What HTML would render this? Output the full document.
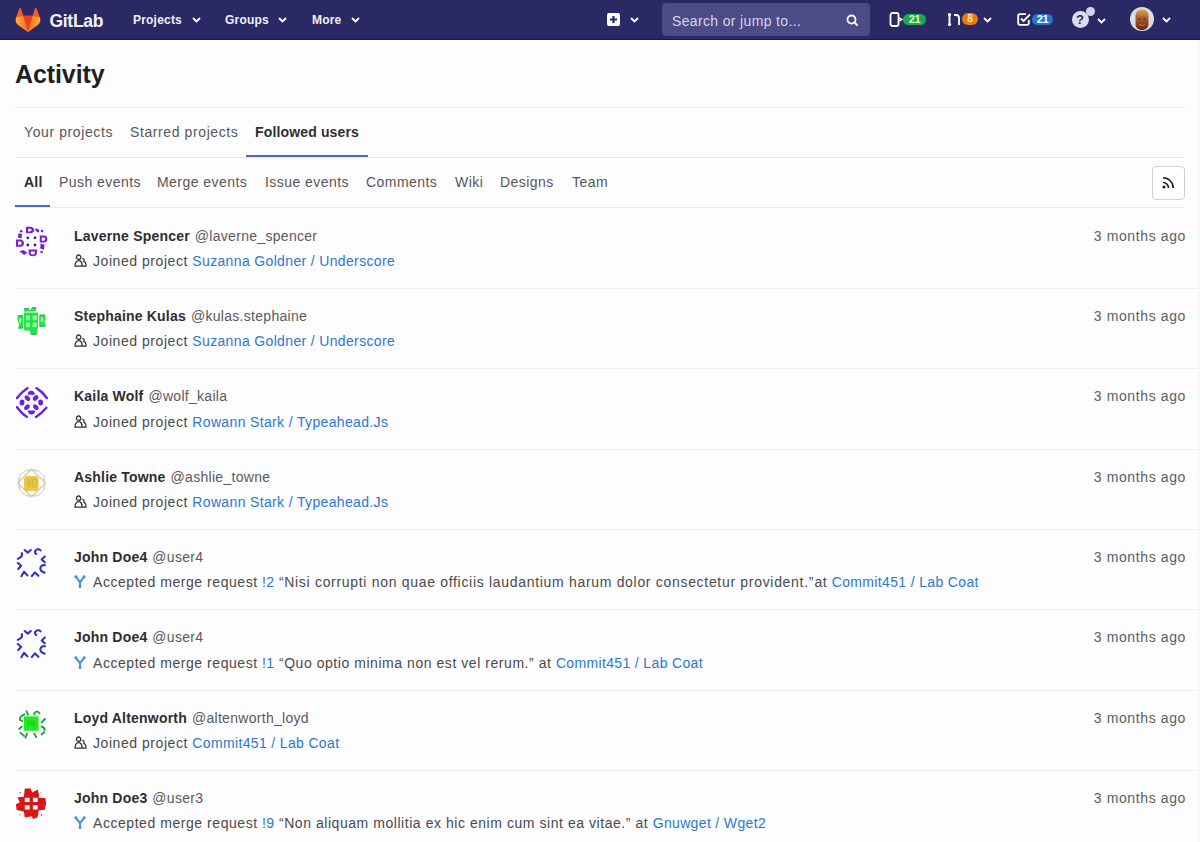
<!DOCTYPE html>
<html><head><meta charset="utf-8">
<style>
*{box-sizing:border-box}
html,body{margin:0;padding:0}
body{width:1200px;height:842px;overflow:hidden;position:relative;background:#fdfcfe;font-family:"Liberation Sans",sans-serif;color:#2e2e2e}
.a{position:absolute;white-space:nowrap;line-height:16px}
#nav{position:absolute;left:0;top:0;width:1200px;height:40px;background:#2a2966;border-bottom:1px solid #1a1a48}
.nt{position:absolute;white-space:nowrap;color:#f2f1fa;font-weight:bold;font-size:12px;line-height:14px;letter-spacing:0.2px}
.chev{position:absolute}
.av,.ic{position:absolute}
.hr{position:absolute;height:1px;background:#e8e8ec}
.row{position:absolute;left:16px;width:1184px;height:1px;background:#efeff1}
.nm{font-weight:bold;font-size:14px;letter-spacing:0.2px;color:#2e2e2e}
.un{font-size:14px;letter-spacing:0.3px;color:#5a5a5a;margin-left:0.5px}
.tx{font-size:14px;letter-spacing:0.55px;color:#4a4a4a}
.lk{color:#2d78cc;letter-spacing:0.35px}
.tm{font-size:14px;letter-spacing:0.62px;color:#5e5e5e}
.tab{font-size:14px;letter-spacing:0.6px;color:#585858}
.ftab{font-size:14px;letter-spacing:0.45px;color:#585858}
</style></head><body>
<!--defs--><svg width="0" height="0" style="position:absolute">
<defs>
<symbol id="ic-users" viewBox="0 0 13 13">
  <circle cx="4.6" cy="3.2" r="2.2" stroke="#333" stroke-width="1.3" fill="none"/>
  <path d="M1 12.2c0-3.6 1.4-5.6 3.6-5.6s3.6 2 3.6 5.6z" stroke="#333" stroke-width="1.3" fill="none" stroke-linejoin="round"/>
  <path d="M8.3 4.4c1.2 0 1.9.9 1.9 2M9.2 7.2c1.9.3 2.8 2 2.8 5h-3.6" stroke="#333" stroke-width="1.3" fill="none"/>
</symbol>
<symbol id="ic-mr" viewBox="0 0 13 13">
  <path d="M2 1.6l4.5 5.6M11 1.6L6.5 7.2M6.5 7v5" stroke="#5196dc" stroke-width="2.3" fill="none" stroke-linecap="round"/>
  <circle cx="2" cy="1.8" r="1.5" fill="#4a8ad2"/><circle cx="11" cy="1.8" r="1.5" fill="#4a8ad2"/><circle cx="6.5" cy="11.6" r="1.4" fill="#4a8ad2"/>
</symbol>
<symbol id="av1" viewBox="0 0 32 32">
  <g fill="#7a20d4">
  <path d="M10 0.8h4c2.8 0 4.2 1.7 4.2 3.2s-1.4 3.2-4.2 3.2h-4zM12.2 2.8v2.6h1.6c1 0 1.8-.5 1.8-1.3s-.8-1.3-1.8-1.3z"/>
  <path d="M18.6 3.2c1-1 2.8-1 3.8 0s1 2.6 0 3.4l-1.6-.8z"/>
  <circle cx="5.2" cy="5.2" r="1.3"/><circle cx="26" cy="5" r="1.3"/>
  <path d="M2.5 7.2l3.6.8-.6 4.6-3.6-1.2z"/>
  <path d="M0 13.6h4c2.8 0 4 1.8 4 3.6s-1.2 3.6-4 3.6H0zM2 15.6v3.2h1.8c1 0 1.8-.7 1.8-1.6s-.8-1.6-1.8-1.6z"/>
  <path d="M23.8 9.6h4.2c2.4 0 3.4 1.7 3.4 3.5s-1 3.5-3.4 3.5h-4.2zM25.8 11.5v3.2h1.8c1 0 1.6-.7 1.6-1.6s-.6-1.6-1.6-1.6z"/>
  <path d="M24.6 17.4l4 1.4-.8 5-3.6-1.4z"/><circle cx="25.6" cy="26" r="1.3"/>
  <path d="M12.6 23.6h8.4v3.2c0 2.2-1.8 3.4-4.2 3.4s-4.2-1.2-4.2-3.4zM14.8 25.6v1.4c0 1 .9 1.5 2 1.5s2-.5 2-1.5v-1.4z"/>
  <path d="M3.4 25.2l4-1.2 4 2.8-3.4 2.2z"/>
  </g>
  <g fill="#3a1f78"><circle cx="11.8" cy="11.8" r="1.4"/><circle cx="19" cy="11.8" r="1.4"/><circle cx="11.8" cy="19" r="1.4"/><circle cx="19" cy="19" r="1.4"/></g>
</symbol>
<symbol id="av2" viewBox="0 0 32 32">
  <g fill="#22e24c">
  <path d="M8 6.5h14v15.5l-1.5 6.5h-5.5l-1.5-4H8z"/>
  <path d="M1.5 9.8l5.5-.4v12.8l-4.8.3 1-3.8-1.7-4.4z"/>
  <path d="M23.2 9h5.8l.7 4.6-1.3 1.9 1.3 4.6-6.5.3z"/>
  <path d="M8 2.2h4.6l1.6 2 1.6-2.4h4.6l-1 3.6H8z"/>
  </g>
  <g fill="#9ff59a"><rect x="9.8" y="9.6" width="4.2" height="4.6" rx="1.2"/><rect x="16.6" y="9.6" width="4.2" height="4.6" rx="1.2"/><rect x="9.8" y="16.6" width="4.2" height="4.6" rx="1.2"/><rect x="16.6" y="16.6" width="4.2" height="4.6" rx="1.2"/>
  <rect x="3" y="12" width="2.4" height="5" rx="1"/><rect x="24.8" y="11" width="2.4" height="5" rx="1"/></g>
  <g fill="none" stroke="#14a83a" stroke-width="0.9">
  <path d="M2 9.8l5-.4M2.2 22.2l4.8-.3M23.4 9h5.6M23.4 20.4h6M8.6 2.4h4M16 1.8h4.6M14.8 28.4h5.6"/>
  </g>
</symbol>
<symbol id="av3" viewBox="0 0 32 32">
  <g stroke="#6a20dc" stroke-width="2.4" stroke-linecap="round" fill="none">
  <path d="M1 11C4 7 7.5 3.5 11.4 1.2"/>
  <path d="M20.6 1.2C24.5 3.5 28 7 30.8 11"/>
  <path d="M1 20.2C4 24 7 27.5 10.8 29.8"/>
  <path d="M20 30C24 27.5 27.6 24 30.4 20.8"/>
  </g>
  <g fill="#6a20dc">
  <path d="M11.6 7.8c0-2.4 1.6-4 3.6-4s3.6 1.6 3.6 4z"/><path d="M11.8 23.4h7.4c0 2.4-1.6 4-3.7 4s-3.7-1.6-3.7-4z"/>
  <ellipse cx="6" cy="15.6" rx="2.4" ry="3"/><ellipse cx="24.6" cy="15.4" rx="2.4" ry="3"/>
  <ellipse cx="11.4" cy="11.2" rx="2.2" ry="3.2" transform="rotate(-45 11.4 11.2)"/>
  <ellipse cx="19.6" cy="11" rx="2.2" ry="3.2" transform="rotate(45 19.6 11)"/>
  <ellipse cx="11" cy="20.2" rx="2.2" ry="3.2" transform="rotate(45 11 20.2)"/>
  <ellipse cx="19.8" cy="20.2" rx="2.2" ry="3.2" transform="rotate(-45 19.8 20.2)"/>
  </g>
</symbol>
<symbol id="av4" viewBox="0 0 32 32">
  <g fill="none" stroke-width="0.9">
  <path d="M15.5 2.2L29.6 16 15.5 29.8 1.6 16z" stroke="#a9a27a"/>
  <path d="M9 3.8h13.5l5.5 5.5v13.5l-5.5 5.5H9l-5.5-5.5V9.3z" stroke="#cfc9a0"/>
  <circle cx="15.6" cy="16" r="14" stroke="#e2dec4"/>
  </g>
  <path d="M10 9h10.6l2 2.2v10.6l-2 2.2H10l-2-2.2V11.2z" fill="#e9c94c"/>
  <path d="M12 12.5v7.5M14.2 12.5v7.5M16.8 12.5h3.4v7.5h-3.4z" stroke="#c9a830" stroke-width="0.8" fill="none"/>
</symbol>
<symbol id="av5" viewBox="0 0 32 32">
  <g fill="none" stroke="#3232c2" stroke-width="2.1" stroke-linecap="round" stroke-linejoin="round">
  <path d="M8.6 3l3.2 2.6 3-2.6"/>
  <path d="M24.6 3.4c-1.4-1.6-4-1.4-5.2.2-.8 1.2-.4 2.8.8 3.4"/>
  <path d="M5.8 6.2c.6 1.6.2 3.2-1.4 4.2l-2.6 1.4"/>
  <path d="M28.8 9.4l-3.2 3 3.2 2.8"/>
  <path d="M1.8 16l3.4 2.8-3 3.2"/>
  <path d="M29 18.2c-2.4-.4-4.4.8-4.6 3-.2 2 1.4 3.8 4.2 4.4"/>
  <path d="M5.4 29.2l2.6-4.4 3.4 3.6"/>
  <path d="M15.8 29l3.2-3.6 3.4 3.4"/>
  </g>
</symbol>
<symbol id="av7" viewBox="0 0 32 32">
  <rect x="8" y="8.4" width="14.6" height="14.3" fill="#22e81c"/>
  <path d="M12.3 13v6M14.8 13l1.2 4 1.2-4M18.5 13v6" stroke="#18b818" stroke-width="0.8" fill="none"/>
  <g fill="none" stroke="#1a9c3a" stroke-width="1.8" stroke-linecap="round">
  <path d="M10.5 3.2l1.6 3.6"/><path d="M18.2 6.5c0-2 1.6-3.3 3.6-2.8l1.8 1.6"/>
  <path d="M8.6 6.4C5.5 7.4 3.8 9.5 3.8 11.8l2.4 1.2"/>
  <path d="M29 10.8l-3.4 3.6"/>
  <path d="M5.8 18.6l-2.6 2.4"/><path d="M25.4 18.6c2.2.4 3.4 1.6 3.2 3.6"/>
  <path d="M4.4 24.6l3.6 3.2"/><path d="M11 25.6l-1.6 4"/><path d="M18.2 25.6l2 3.4"/><path d="M25.6 26.5l2.6-2.2"/>
  </g>
</symbol>
<symbol id="av8" viewBox="0 0 32 32">
  <path fill="#d81616" fill-rule="evenodd" d="M8.8 0.6h5.7l1.9 3.8 5.2-2.8 1.5 5.2-.5 2.9 6.7.4.9 5.3-1.4 4.7.5 1.4-6.7 1-.5 4.3-.9 2.8-4.3 1.4-.9-2.8-7.2 1.4-.9-6.2-7.2-1.4-.9-5.7 3.8-1.9-1.9-5.2 6.2-.5zM8.8 9.7h4.8v4.2H8.8zM16.9 9.7h4.7v4.2h-4.7zM8.8 17.3h4.8v4.2H8.8zM16.9 17.3h4.7v4.2h-4.7z"/>
  <circle cx="4.2" cy="4.6" r="0.7" fill="#444"/><circle cx="4" cy="26.8" r="0.6" fill="#777"/><circle cx="25.6" cy="27" r="0.8" fill="#555"/><circle cx="25" cy="4.6" r="0.5" fill="#999"/>
</symbol>
</defs></svg>
<!--/defs-->
<div id="nav">
  <!-- logo -->
  <svg style="position:absolute;left:14.5px;top:7.5px" width="26" height="24" viewBox="0 0 25 24">
    <defs><linearGradient id="lgL" x1="0" y1="0" x2="1" y2="0"><stop offset="0" stop-color="#fcb23a"/><stop offset="1" stop-color="#f56a25"/></linearGradient>
    <linearGradient id="lgR" x1="1" y1="0" x2="0" y2="0"><stop offset="0" stop-color="#fcb23a"/><stop offset="1" stop-color="#f56a25"/></linearGradient></defs>
    <path d="m24.507 9.5-.034-.09L21.082.562a.896.896 0 0 0-1.694.091l-2.29 7.01H7.825L5.535.653a.898.898 0 0 0-1.694-.09L.451 9.411.416 9.5a6.297 6.297 0 0 0 2.09 7.278l.012.01.03.022 5.16 3.867 2.56 1.935 1.554 1.176a1.051 1.051 0 0 0 1.268 0l1.555-1.176 2.56-1.935 5.197-3.89.014-.01A6.297 6.297 0 0 0 24.507 9.5Z" fill="#f35b24"/>
    <path d="M0.45 9.4L7.8 7.7 12.5 23.9 2.5 16.8C.5 15 .1 12 .45 9.4z" fill="url(#lgL)"/>
    <path d="M24.5 9.4L17.1 7.7 12.5 23.9 22.4 16.8c2-1.8 2.4-4.8 2.1-7.4z" fill="url(#lgR)"/>
    <path d="M7.8 7.7h9.3L12.5 22z" fill="#ea3d1f"/>
  </svg>
  <div class="nt" style="left:49.5px;top:10.5px;font-size:17.5px;line-height:20px;letter-spacing:-0.3px">GitLab</div>
  <div class="nt" style="left:133px;top:13px">Projects</div>
  <svg class="chev" style="left:192px;top:17px" width="9" height="6" viewBox="0 0 9 6"><path d="M1 1l3.5 3.5L8 1" stroke="#fff" stroke-width="1.8" fill="none"/></svg>
  <div class="nt" style="left:225px;top:13px">Groups</div>
  <svg class="chev" style="left:278px;top:17px" width="9" height="6" viewBox="0 0 9 6"><path d="M1 1l3.5 3.5L8 1" stroke="#fff" stroke-width="1.8" fill="none"/></svg>
  <div class="nt" style="left:312px;top:13px">More</div>
  <svg class="chev" style="left:351px;top:17px" width="9" height="6" viewBox="0 0 9 6"><path d="M1 1l3.5 3.5L8 1" stroke="#fff" stroke-width="1.8" fill="none"/></svg>
  <!-- plus -->
  <div style="position:absolute;left:607px;top:13px;width:13px;height:13px;background:#fff;border-radius:2px"></div>
  <svg style="position:absolute;left:607px;top:13px" width="13" height="13" viewBox="0 0 13 13"><path d="M6.5 3v7M3 6.5h7" stroke="#292961" stroke-width="2.2"/></svg>
  <svg class="chev" style="left:630px;top:17px" width="9" height="6" viewBox="0 0 9 6"><path d="M1 1l3.5 3.5L8 1" stroke="#fff" stroke-width="1.8" fill="none"/></svg>
  <!-- search -->
  <div style="position:absolute;left:662px;top:3px;width:208px;height:33px;background:#4c4b88;border-radius:4px"></div>
  <div class="a" style="left:672px;top:13px;font-size:14px;letter-spacing:0.35px;color:#d6d5ea">Search or jump to...</div>
  <svg style="position:absolute;left:846px;top:14px" width="13" height="13" viewBox="0 0 13 13"><circle cx="5.5" cy="5.5" r="4" stroke="#fff" stroke-width="1.8" fill="none"/><path d="M8.5 8.5l3.2 3.2" stroke="#fff" stroke-width="1.8"/></svg>
  <!-- issues -->
  <svg style="position:absolute;left:889px;top:12px" width="14" height="15" viewBox="0 0 14 15"><rect x="1.5" y="1" width="8" height="13" rx="2" stroke="#fff" stroke-width="1.8" fill="none"/><path d="M10 6l3 1.5-3 1.5" stroke="#fff" stroke-width="1.4" fill="none"/></svg>
  <div style="position:absolute;left:903px;top:14px;width:23px;height:11px;background:#1aaa55;border-radius:6px;color:#e6f7b0;font-size:11px;font-weight:bold;line-height:11px;letter-spacing:-0.3px;text-align:center">21</div>
  <!-- mr -->
  <svg style="position:absolute;left:947px;top:12px" width="16" height="15" viewBox="0 0 16 15"><path d="M2.5 2v11" stroke="#fff" stroke-width="2"/><circle cx="2.5" cy="2.5" r="1.6" fill="#fff"/><circle cx="2.5" cy="12.5" r="1.6" fill="#fff"/><path d="M12 13V6c0-2-1-3-3-3H7" stroke="#fff" stroke-width="1.8" fill="none"/></svg>
  <div style="position:absolute;left:962px;top:13px;width:16px;height:12px;background:#e87b16;border-radius:6px;color:#ffe9a0;font-size:10px;font-weight:bold;line-height:12px;text-align:center">8</div>
  <svg class="chev" style="left:983px;top:17px" width="9" height="6" viewBox="0 0 9 6"><path d="M1 1l3.5 3.5L8 1" stroke="#fff" stroke-width="1.8" fill="none"/></svg>
  <!-- todos -->
  <svg style="position:absolute;left:1017px;top:13px" width="15" height="13" viewBox="0 0 15 13"><path d="M9 1.2H3c-1 0-1.8.8-1.8 1.8v7c0 1 .8 1.8 1.8 1.8h7c1 0 1.8-.8 1.8-1.8V7" stroke="#fff" stroke-width="1.8" fill="none"/><path d="M4 5.5l2.5 2.5L13 1.5" stroke="#fff" stroke-width="1.8" fill="none"/></svg>
  <div style="position:absolute;left:1032px;top:14px;width:21px;height:11px;background:#1f78d1;border-radius:6px;color:#fff;font-size:11px;font-weight:bold;line-height:11px;letter-spacing:-0.3px;text-align:center">21</div>
  <!-- help -->
  <div style="position:absolute;left:1072px;top:11px;width:17px;height:17px;border-radius:50%;background:#dcdcf0"></div>
  <div class="a" style="left:1076px;top:12px;font-size:13px;font-weight:bold;color:#292961;line-height:16px">?</div>
  <div style="position:absolute;left:1086px;top:7px;width:9px;height:9px;border-radius:50%;background:#d5d5ea"></div>
  <svg class="chev" style="left:1097px;top:18px" width="9" height="6" viewBox="0 0 9 6"><path d="M1 1l3.5 3.5L8 1" stroke="#fff" stroke-width="1.8" fill="none"/></svg>
  <!-- avatar -->
  <div style="position:absolute;left:1130px;top:7px;width:24px;height:24px;border-radius:50%;background:#dcdce6;overflow:hidden">
    <svg width="24" height="24" viewBox="0 0 24 24" style="position:absolute;left:0;top:0">
      <defs><linearGradient id="face" x1="0" y1="0" x2="0" y2="1"><stop offset="0" stop-color="#d9a45a"/><stop offset="0.35" stop-color="#b06a35"/><stop offset="0.7" stop-color="#8c3f22"/><stop offset="1" stop-color="#5a2a18"/></linearGradient></defs>
      <path d="M5.5 9c0-4.5 2.8-6.5 6.5-6.5s6.5 2 6.5 6.5v8c0 3.5-2.5 6-6.5 6s-6.5-2.5-6.5-6z" fill="url(#face)"/>
      <path d="M8 12h3M13 12h3" stroke="#5a2818" stroke-width="1"/>
      <path d="M9 17.5c1.5 1 4.5 1 6 0" stroke="#c96a50" stroke-width="1.2" fill="none"/>
    </svg>
  </div>
  <svg class="chev" style="left:1162px;top:17px" width="9" height="6" viewBox="0 0 9 6"><path d="M1 1l3.5 3.5L8 1" stroke="#fff" stroke-width="1.8" fill="none"/></svg>
</div>

<!-- title -->
<div class="a" style="left:15px;top:60px;font-size:25px;line-height:28px;letter-spacing:-0.1px;font-weight:bold;color:#1f1f1f">Activity</div>
<div class="hr" style="left:15px;top:107px;width:1170px"></div>

<!-- tabs -->
<div class="a tab" style="left:24px;top:124px">Your projects</div>
<div class="a tab" style="left:130px;top:124px">Starred projects</div>
<div class="a nm" style="left:255px;top:124px;letter-spacing:0.15px">Followed users</div>
<div class="hr" style="left:15px;top:157px;width:1170px"></div>
<div style="position:absolute;left:246px;top:155px;width:122px;height:2px;background:#5066c6"></div>

<!-- filter -->
<div class="a nm" style="left:24px;top:174px">All</div>
<div class="a ftab" style="left:59px;top:174px">Push events</div>
<div class="a ftab" style="left:157px;top:174px">Merge events</div>
<div class="a ftab" style="left:265px;top:174px">Issue events</div>
<div class="a ftab" style="left:366px;top:174px">Comments</div>
<div class="a ftab" style="left:455px;top:174px">Wiki</div>
<div class="a ftab" style="left:500px;top:174px">Designs</div>
<div class="a ftab" style="left:572px;top:174px">Team</div>
<div style="position:absolute;left:1152px;top:166px;width:33px;height:34px;border:1px solid #d0d0d4;border-radius:4px;background:#fff"></div>
<svg style="position:absolute;left:1162px;top:176px" width="13" height="13" viewBox="0 0 13 13"><circle cx="2" cy="11" r="1.6" fill="#222"/><path d="M1 6.5a5.5 5.5 0 0 1 5.5 5.5" stroke="#222" stroke-width="1.6" fill="none"/><path d="M1 1.8a10.2 10.2 0 0 1 10.2 10.2" stroke="#222" stroke-width="1.6" fill="none"/></svg>
<div class="hr" style="left:15px;top:207px;width:1170px"></div>
<div style="position:absolute;left:15px;top:205px;width:35px;height:2px;background:#5066c6"></div>

<!-- rows -->
<div id="rows">
<svg class="av" style="left:16px;top:226px" width="32" height="32"><use href="#av1"/></svg>
<div class="a" style="left:74px;top:228px"><span class="nm">Laverne Spencer</span> <span class="un">@laverne_spencer</span></div>
<div class="a tm" style="right:14px;top:228px">3 months ago</div>
<svg class="ic" style="left:74px;top:254px" width="13" height="13" viewBox="0 0 13 13" preserveAspectRatio="none"><use href="#ic-users"/></svg>
<div class="a tx" style="left:93px;top:253px">Joined project <span class="lk">Suzanna Goldner / Underscore</span></div>
<div class="row" style="top:288px"></div>
<svg class="av" style="left:16px;top:306px" width="32" height="32"><use href="#av2"/></svg>
<div class="a" style="left:74px;top:308px"><span class="nm">Stephaine Kulas</span> <span class="un">@kulas.stephaine</span></div>
<div class="a tm" style="right:14px;top:308px">3 months ago</div>
<svg class="ic" style="left:74px;top:334px" width="13" height="13" viewBox="0 0 13 13" preserveAspectRatio="none"><use href="#ic-users"/></svg>
<div class="a tx" style="left:93px;top:333px">Joined project <span class="lk">Suzanna Goldner / Underscore</span></div>
<div class="row" style="top:368px"></div>
<svg class="av" style="left:16px;top:387px" width="32" height="32"><use href="#av3"/></svg>
<div class="a" style="left:74px;top:388px"><span class="nm">Kaila Wolf</span> <span class="un">@wolf_kaila</span></div>
<div class="a tm" style="right:14px;top:388px">3 months ago</div>
<svg class="ic" style="left:74px;top:415px" width="13" height="13" viewBox="0 0 13 13" preserveAspectRatio="none"><use href="#ic-users"/></svg>
<div class="a tx" style="left:93px;top:414px">Joined project <span class="lk">Rowann Stark / Typeahead.Js</span></div>
<div class="row" style="top:449px"></div>
<svg class="av" style="left:16px;top:467px" width="32" height="32"><use href="#av4"/></svg>
<div class="a" style="left:74px;top:469px"><span class="nm">Ashlie Towne</span> <span class="un">@ashlie_towne</span></div>
<div class="a tm" style="right:14px;top:469px">3 months ago</div>
<svg class="ic" style="left:74px;top:495px" width="13" height="13" viewBox="0 0 13 13" preserveAspectRatio="none"><use href="#ic-users"/></svg>
<div class="a tx" style="left:93px;top:494px">Joined project <span class="lk">Rowann Stark / Typeahead.Js</span></div>
<div class="row" style="top:529px"></div>
<svg class="av" style="left:16px;top:547px" width="32" height="32"><use href="#av5"/></svg>
<div class="a" style="left:74px;top:549px"><span class="nm">John Doe4</span> <span class="un">@user4</span></div>
<div class="a tm" style="right:14px;top:549px">3 months ago</div>
<svg class="ic" style="left:74px;top:575px" width="12" height="13" viewBox="0 0 13 13" preserveAspectRatio="none"><use href="#ic-mr"/></svg>
<div class="a tx" style="left:93px;top:574px">Accepted merge request <span class="lk">!2</span> <span style="letter-spacing:0.69px;margin-right:-4px">“Nisi corrupti non quae officiis laudantium harum dolor consectetur provident.”</span> at <span class="lk">Commit451 / Lab Coat</span></div>
<div class="row" style="top:609px"></div>
<svg class="av" style="left:16px;top:628px" width="32" height="32"><use href="#av5"/></svg>
<div class="a" style="left:74px;top:629px"><span class="nm">John Doe4</span> <span class="un">@user4</span></div>
<div class="a tm" style="right:14px;top:629px">3 months ago</div>
<svg class="ic" style="left:74px;top:656px" width="12" height="13" viewBox="0 0 13 13" preserveAspectRatio="none"><use href="#ic-mr"/></svg>
<div class="a tx" style="left:93px;top:655px">Accepted merge request <span class="lk">!1</span> <span>“Quo optio minima non est vel rerum.”</span> at <span class="lk">Commit451 / Lab Coat</span></div>
<div class="row" style="top:690px"></div>
<svg class="av" style="left:16px;top:708px" width="32" height="32"><use href="#av7"/></svg>
<div class="a" style="left:74px;top:710px"><span class="nm">Loyd Altenworth</span> <span class="un">@altenworth_loyd</span></div>
<div class="a tm" style="right:14px;top:710px">3 months ago</div>
<svg class="ic" style="left:74px;top:736px" width="13" height="13" viewBox="0 0 13 13" preserveAspectRatio="none"><use href="#ic-users"/></svg>
<div class="a tx" style="left:93px;top:735px">Joined project <span class="lk">Commit451 / Lab Coat</span></div>
<div class="row" style="top:770px"></div>
<svg class="av" style="left:16px;top:788px" width="32" height="32"><use href="#av8"/></svg>
<div class="a" style="left:74px;top:790px"><span class="nm">John Doe3</span> <span class="un">@user3</span></div>
<div class="a tm" style="right:14px;top:790px">3 months ago</div>
<svg class="ic" style="left:74px;top:816px" width="12" height="13" viewBox="0 0 13 13" preserveAspectRatio="none"><use href="#ic-mr"/></svg>
<div class="a tx" style="left:93px;top:815px">Accepted merge request <span class="lk">!9</span> <span>“Non aliquam mollitia ex hic enim cum sint ea vitae.”</span> at <span class="lk">Gnuwget / Wget2</span></div>
</div><!--/rows-->
<div id="rstrip" style="position:absolute;left:1198px;top:40px;width:2px;height:802px;background:#f8f8f9"></div>
</body></html>
